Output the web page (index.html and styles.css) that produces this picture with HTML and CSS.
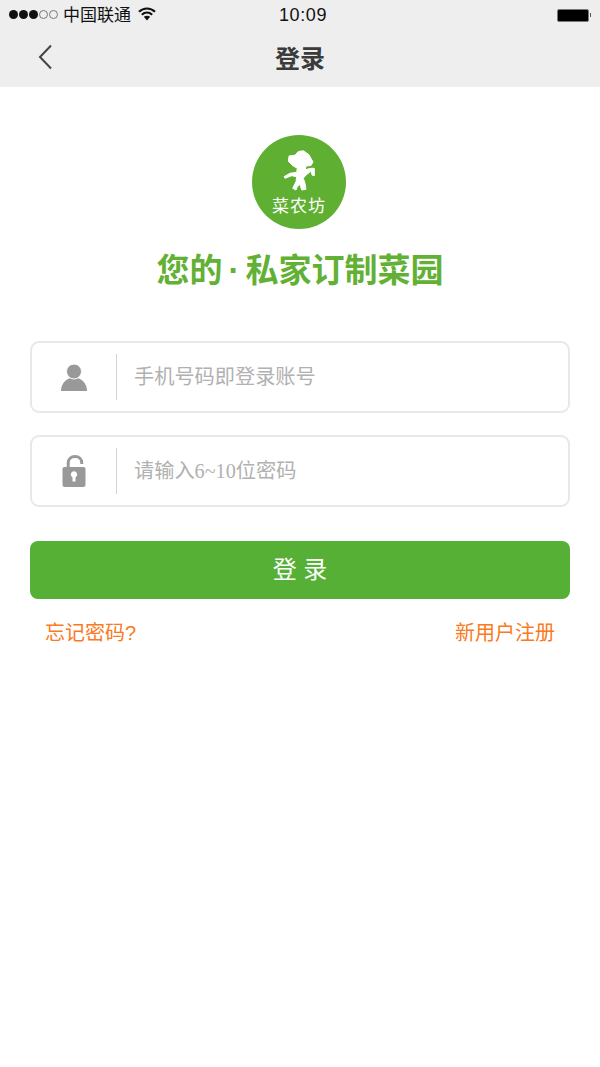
FILE: index.html
```html
<!DOCTYPE html>
<html lang="zh-CN">
<head>
  <meta charset="UTF-8" />
  <meta name="viewport" content="width=device-width, initial-scale=1.0" />
  <title>登录</title>
  <link rel="stylesheet" href="styles.css">
</head>
<body>
  <div class="top">
    <div class="status-bar">
      <div class="status-left">
        <span class="signal">
          <i class="dot"></i><i class="dot"></i><i class="dot"></i><i class="dot empty"></i><i class="dot empty"></i>
        </span>
        <span class="carrier">中国联通</span>
        <svg class="wifi" width="18" height="14" viewBox="0 0 18 14">
          <path d="M1 4.800C5.600 .4 12.400 .4 17 4.800" fill="none" stroke="#111" stroke-width="2.200"/>
          <path d="M3.800 7.800C6.900 5 11.100 5 14.200 7.800" fill="none" stroke="#111" stroke-width="2.200"/>
          <path d="M5.800 9.800C7.800 8.400 10.200 8.400 12.200 9.800L9 13.600Z" fill="#111"/>
        </svg>
      </div>
      <div class="time">10:09</div>
      <div class="battery"><span class="battery-body"></span><span class="battery-tip"></span></div>
    </div>
    <div class="nav-bar">
      <svg class="back" width="14" height="26" viewBox="0 0 14 26">
        <path d="M13 1.500L2 13L13 24.500" fill="none" stroke="#444" stroke-width="2"/>
      </svg>
      <div class="nav-title">登录</div>
    </div>
  </div>

  <div class="logo">
    <div class="logo-circle">
      <svg class="logo-figure" width="32" height="42" viewBox="0 0 32 42">
        <path fill="#fff" stroke="#fff" stroke-linejoin="round" d="M6 6L12 5.200L15.300 1.500L20.300 .8L25.800 4.500L30 12L28 15.500L23 16L22.300 20L24.700 19L28.700 18.300L31.300 18.300L31.300 25.700L29 25L28.300 21L23 25L20.300 28.300L22 33.300L23 39.300L18.700 40L17 34.300L14.300 36.700L13 40L9.700 38.300L13 31.700L13.700 26.700L8.700 25.700L2 28.300L1 26.700L7 23.300L13.700 22.300L14.300 18.300L9.500 15.500L5.500 11.500Z"/>
      </svg>
      <div class="logo-name">菜农坊</div>
    </div>
    <div class="slogan">您的<span class="slogan-dot">·</span>私家订制菜园</div>
  </div>

  <form class="login-form" onsubmit="event.preventDefault();">
    <label class="field">
      <span class="field-icon">
        <svg width="26" height="27" viewBox="0 0 26 27">
          <path d="M0 27C0 19 6 13.500 13 13.500C20 13.500 26 19 26 27Z" fill="#999"/>
          <circle cx="13" cy="7.500" r="7.500" fill="#999" stroke="#fff" stroke-width="1"/>
        </svg>
      </span>
      <input class="field-input" type="text" placeholder="手机号码即登录账号">
    </label>
    <label class="field">
      <span class="field-icon">
        <svg width="24" height="32" viewBox="0 0 24 32">
          <path d="M6.200 12V8C6.200 4 9 1.500 13 1.500C17 1.500 19.800 4 19.800 8V9" fill="none" stroke="#999" stroke-width="3"/>
          <path fill="#999" fill-rule="evenodd" d="M2.500 12H21.500C22.800 12 23.500 12.800 23.500 14V29.500C23.500 31 22.800 32 21.500 32H2.500C1.200 32 .5 31 .5 29.500V14C.5 12.800 1.200 12 2.500 12ZM12 16.300C10.200 16.300 8.800 17.700 8.800 19.500C8.800 20.700 9.500 21.700 10.500 22.200V26.500H13.500V22.200C14.500 21.700 15.200 20.700 15.200 19.500C15.200 17.700 13.800 16.300 12 16.300Z"/>
        </svg>
      </span>
      <input class="field-input" type="password" placeholder="请输入6~10位密码">
    </label>
    <button class="enter" type="submit">登 录</button>
    <div class="links">
      <a class="link" href="#">忘记密码?</a>
      <a class="link" href="#">新用户注册</a>
    </div>
  </form>
</body>
</html>
```

FILE: styles.css
```css
html, body {
  overflow-x: hidden;
}

body {
  margin: 0;
  background-color: #fff;
  font-family: "Liberation Sans", "Noto Sans CJK SC", sans-serif;
}

.top {
  background-color: #eee;
  height: 87px;
}

.status-bar {
  display: flex;
  align-items: center;
  justify-content: space-between;
  height: 30px;
  padding: 0 9px 0 9px;
  position: relative;
  color: #111;
}

.status-left {
  display: flex;
  align-items: center;
}

.signal {
  display: flex;
  gap: 1px;
  margin-top: -2px;
}

.dot {
  display: block;
  width: 9px;
  height: 9px;
  border-radius: 50%;
  background-color: #111;
  box-sizing: border-box;
}

.dot.empty {
  background-color: transparent;
  border: 1px solid #777;
}

.carrier {
  font-size: 17px;
  line-height: 24px;
  margin-left: 5px;
  margin-top: 2px;
}

.wifi {
  margin-left: 7px;
  margin-top: -2px;
}

.time {
  position: absolute;
  left: 6px;
  right: 0;
  margin-top: 1px;
  text-align: center;
  font-size: 18px;
  letter-spacing: 0.6px;
}

.battery {
  display: flex;
  align-items: center;
}

.battery-body {
  display: block;
  width: 30px;
  height: 11px;
  background-color: #000;
  border: 1px solid #777;
  border-radius: 2px;
  box-sizing: content-box;
}

.battery-tip {
  display: block;
  width: 1.500px;
  height: 4px;
  background-color: #555;
  margin-left: 1px;
}

.nav-bar {
  display: flex;
  align-items: center;
  justify-content: center;
  height: 57px;
  position: relative;
}

.back {
  position: absolute;
  left: 38px;
  top: 14px;
}

.nav-title {
  font-size: 25px;
  font-weight: bold;
  color: #3b3b3b;
  padding-bottom: 3px;
}

.logo {
  display: flex;
  flex-direction: column;
  align-items: center;
  padding-top: 48px;
}

.logo-circle {
  display: flex;
  flex-direction: column;
  align-items: center;
  width: 94px;
  height: 94px;
  border-radius: 50%;
  background-color: #5fb032;
  margin-right: 2px;
}

.logo-figure {
  margin-top: 15px;
}

.logo-name {
  font-size: 17px;
  line-height: 20px;
  margin-top: 5px;
  color: #fff;
  letter-spacing: 1px;
}

.slogan {
  margin-top: 21px;
  font-size: 33px;
  line-height: 42px;
  font-weight: bold;
  color: #62b135;
}

.slogan-dot {
  margin: 0 6px;
}

.login-form {
  padding: 49px 30px 0;
}

.field {
  display: flex;
  align-items: center;
  height: 72px;
  box-sizing: border-box;
  margin-bottom: 22px;
  border: 2px solid #e8e8e8;
  border-radius: 9px;
}

.field-icon {
  display: flex;
  align-items: center;
  justify-content: center;
  width: 84px;
  height: 46px;
  border-right: 1px solid #d6d6d6;
}

.field-input {
  flex: 1;
  min-width: 0;
  padding: 0 0 0 17px;
  border: none;
  outline: none;
  font-family: "Liberation Serif", "Noto Sans CJK SC", serif;
  font-size: 20.200px;
  color: #333;
  background-color: transparent;
}

.field-input::placeholder {
  color: #b1b1b1;
  opacity: 1;
}

.enter {
  display: block;
  width: 100%;
  height: 58px;
  margin-top: 34px;
  padding: 0 0 5px;
  border: none;
  border-radius: 8px;
  background-color: #56b035;
  color: #fff;
  font-family: inherit;
  font-size: 24px;
  cursor: pointer;
}

.links {
  display: flex;
  justify-content: space-between;
  padding: 21px 15px 0;
}

.link {
  font-size: 20px;
  line-height: 26px;
  color: #f97a22;
  text-decoration: none;
}
```
